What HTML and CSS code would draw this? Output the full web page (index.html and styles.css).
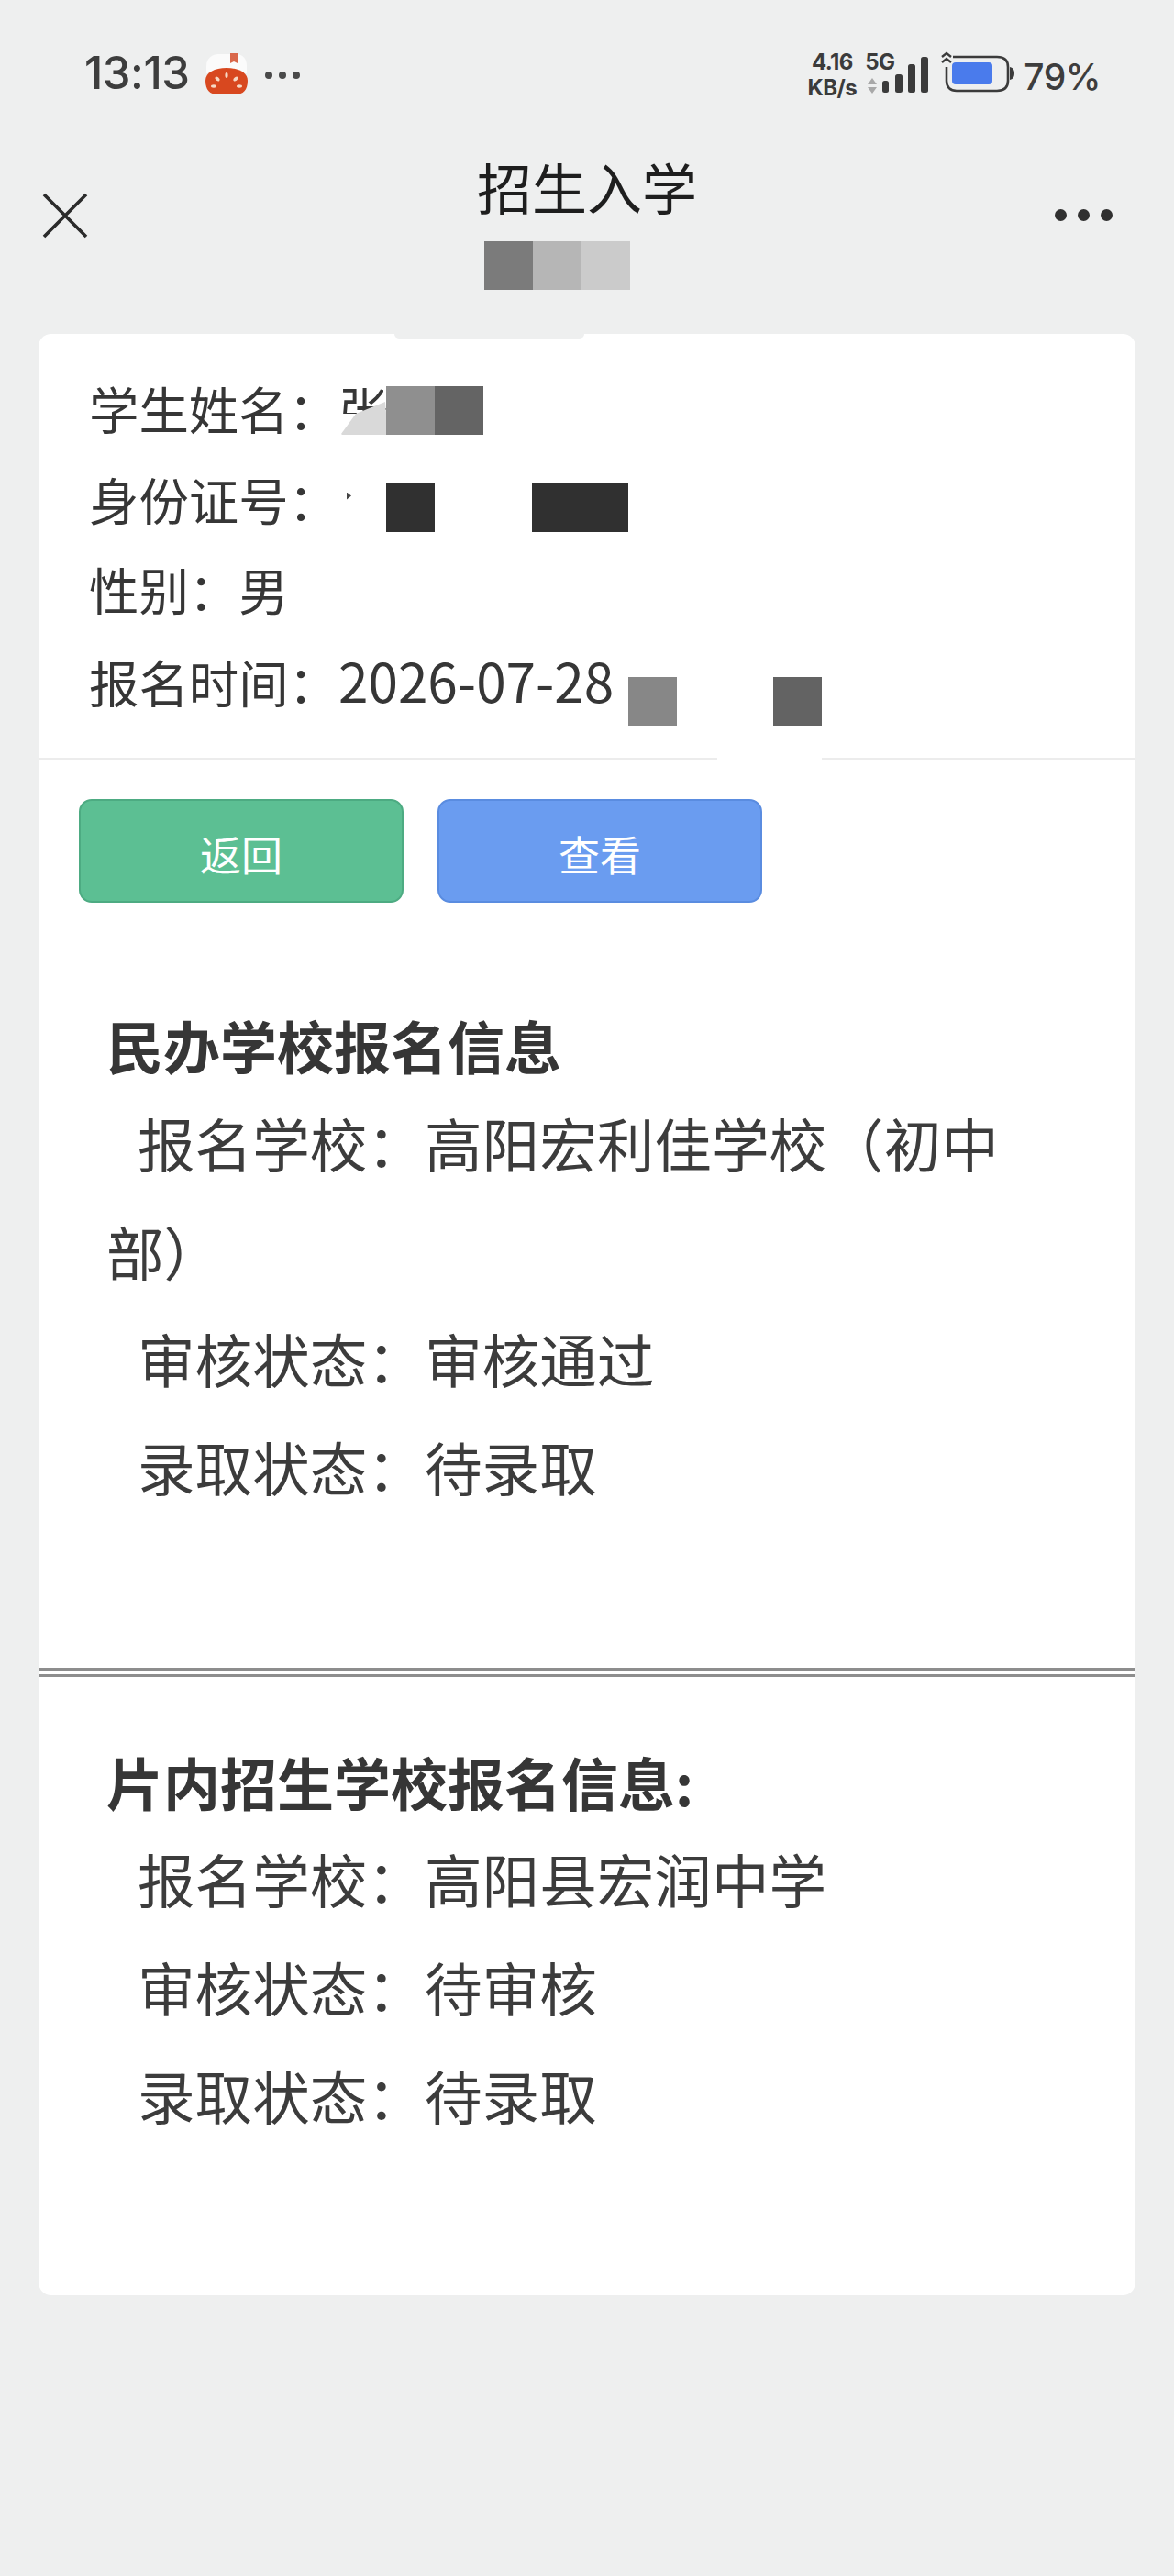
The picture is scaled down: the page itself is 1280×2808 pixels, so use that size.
FILE: index.html
```html
<!DOCTYPE html>
<html lang="zh-CN">
<head>
<meta charset="utf-8">
<title>招生入学</title>
<link rel="stylesheet" href="styles.css">
</head>
<body>
<div class="page">
  <header class="status">
    <div class="status-left">
      <span class="time">13:13</span>
      <svg class="app-icon" width="48" height="46" viewBox="0 0 48 46">
        <path d="M2 14C2 5 9 1 15 1H34C41 1 46 5 46 14V22H2Z" fill="#fbfbfb"/>
        <path d="M28 0H36V11L32 9L28 11Z" fill="#d9674a"/>
        <path d="M1 30C1 21 11 16 24 16C37 16 47 21 47 30C47 40 42 45 34 45H14C6 45 1 40 1 30Z" fill="#d8481f"/>
        <g fill="#f6d9c5">
          <ellipse cx="24" cy="24" rx="1.6" ry="3"/>
          <ellipse cx="14" cy="28" rx="1.8" ry="3" transform="rotate(-50 14 28)"/>
          <ellipse cx="34" cy="28" rx="1.8" ry="3" transform="rotate(50 34 28)"/>
          <ellipse cx="10" cy="36" rx="3" ry="1.7"/>
          <ellipse cx="38" cy="36" rx="3" ry="1.7"/>
        </g>
      </svg>
      <span class="status-dots"><i></i><i></i><i></i></span>
    </div>
    <div class="status-right">
      <div class="net">
        <span class="speed">4.16</span>
        <span class="unit">KB/s</span>
      </div>
      <div class="cell">
        <span class="five-g">5G</span>
        <svg class="updown" width="10" height="17" viewBox="0 0 10 17"><path d="M5 0L10 7H0ZM5 17L0 10H10Z" fill="#a8a8a8"/></svg>
      </div>
      <svg class="signal" width="50" height="40" viewBox="0 0 50 40">
        <rect x="0" y="26" width="7" height="13" rx="2.5" fill="#3b3b3b"/>
        <rect x="14" y="19" width="8" height="20" rx="2.5" fill="#3b3b3b"/>
        <rect x="28" y="8" width="8" height="31" rx="2.5" fill="#3b3b3b"/>
        <rect x="42" y="0" width="8" height="39" rx="2.5" fill="#3b3b3b"/>
      </svg>
      <svg class="battery" width="82" height="46" viewBox="0 0 82 46">
        <path d="M2 7L7 3L12 7M2 13L7 9L12 13" fill="none" stroke="#3b3b3b" stroke-width="2.4"/>
        <path d="M14 7H62C70 7 74 11 74 18V33C74 40 70 44 62 44H18C11 44 7 40 7 33V18" fill="none" stroke="#3b3b3b" stroke-width="2.6"/>
        <rect x="13" y="13" width="44" height="24" rx="4" fill="#4a7bec"/>
        <path d="M76 18C80 19 81 22 81 25C81 28 80 31 76 32Z" fill="#3b3b3b"/>
      </svg>
      <span class="percent">79%</span>
    </div>
  </header>

  <nav class="nav">
    <div class="nav-left">
      <svg width="50" height="50" viewBox="0 0 50 50"><path d="M2 2L48 48M48 2L2 48" fill="none" stroke="#2b2b2b" stroke-width="3.6"/></svg>
    </div>
    <div class="nav-center">
      <div class="title">招生入学</div>
      <div class="title-mask"><i class="m1"></i><i class="m2"></i><i class="m3"></i></div>
    </div>
    <div class="nav-right"><span class="more"><i></i><i></i><i></i></span></div>
  </nav>

  <main class="card">
    <span class="card-notch"></span>
    <section class="info">
      <div class="info-row">学生姓名：张
        <svg class="mask-name" width="51" height="53" viewBox="0 0 51 53"><path d="M0 30H16V53H0ZM46 2L51 0V24H46Z" fill="#fff"/><path d="M0 52L16 30L48 17L51 53H1Z" fill="#d9d9d9"/></svg>
        <span class="block b-name1"></span><span class="block b-name2"></span>
      </div>
      <div class="info-row">身份证号：<span class="tick"></span>
        <span class="block b-id1"></span><span class="block b-id2"></span>
      </div>
      <div class="info-row">性别：男</div>
      <div class="info-row">报名时间：<span class="date">2026-07-28</span>
        <span class="block b-time1"></span><span class="block b-time2"></span>
      </div>
      <span class="line-gap"></span>
    </section>

    <div class="actions">
      <button class="btn btn-green" type="button">返回</button>
      <button class="btn btn-blue" type="button">查看</button>
    </div>

    <section class="school school-a">
      <h2>民办学校报名信息</h2>
      <p>报名学校：高阳宏利佳学校（初中部）</p>
      <p>审核状态：审核通过</p>
      <p>录取状态：待录取</p>
    </section>

    <hr class="rule">

    <section class="school school-b">
      <h2>片内招生学校报名信息:</h2>
      <p>报名学校：高阳县宏润中学</p>
      <p>审核状态：待审核</p>
      <p>录取状态：待录取</p>
    </section>
  </main>
</div>
</body>
</html>
```

FILE: styles.css
```css
* { box-sizing: border-box; }
html, body { margin: 0; padding: 0; }
body {
  background: #eeefef;
  font-family: "Noto Sans CJK SC", "Noto Sans", sans-serif;
  color: #333;
}
.page { width: 1280px; height: 2808px; background: #eeefef; overflow: hidden; }

/* status bar */
.status {
  height: 160px;
  padding: 54px 80px 0 92px;
  display: flex;
  justify-content: space-between;
  align-items: flex-start;
}
.status-left { display: flex; align-items: center; height: 52px; }
.time { font-family: Inter, sans-serif; font-weight: 500; font-size: 49px; line-height: 52px; color: #3d3d3d; letter-spacing: -0.5px; }
.app-icon { margin-left: 17px; margin-top: 2px; }
.status-dots { display: flex; gap: 7px; margin-left: 18px; margin-top: 4px; }
.status-dots i { width: 8px; height: 8px; border-radius: 50%; background: #4a4a4a; display: block; }
.status-right { display: flex; align-items: flex-start; height: 52px; }
.net, .cell { display: flex; flex-direction: column; font-family: Inter, sans-serif; font-weight: 700; color: #3b3b3b; }
.net { width: 54px; align-items: center; font-size: 24px; line-height: 28px; letter-spacing: -0.6px; }
.cell { margin-left: 9px; width: 34px; font-size: 24px; line-height: 28px; letter-spacing: -0.6px; }
.updown { margin-top: 3px; margin-left: 3px; }
.signal { margin-left: -15px; margin-top: 8px; }
.battery { margin-left: 13px; margin-top: 1px; }
.percent { font-family: Inter, sans-serif; font-weight: 500; font-size: 39px; line-height: 48px; color: #3d3d3d; margin-left: 9px; margin-top: 6px; letter-spacing: -0.5px; }

/* navigation */
.nav {
  height: 204px;
  display: grid;
  grid-template-columns: 1fr 240px 1fr;
}
.nav-left { padding: 50px 0 0 46px; }
.nav-left svg { display: block; }
.nav-center { display: flex; flex-direction: column; align-items: center; }
.title { font-size: 60px; line-height: 86px; color: #1e1e1e; white-space: nowrap; }
.title-mask { display: flex; margin-top: 17px; margin-right: 66px; }
.title-mask i { display: block; width: 53px; height: 53px; }
.m1 { background: #7b7b7b; }
.m2 { background: #b6b6b6; }
.m3 { background: #cbcbcb; }
.nav-right { display: flex; justify-content: flex-end; padding: 68px 67px 0 0; }
.more { display: flex; gap: 12px; height: 14px; }
.more i { display: block; width: 13px; height: 13px; border-radius: 50%; background: #303030; }

/* card */
.card {
  position: relative;
  width: 1196px;
  height: 2138px;
  margin-left: 42px;
  background: #fff;
  border-radius: 14px;
}
.card-notch { position: absolute; left: 388px; top: 0; width: 207px; height: 5px; background: #eeefef; border-radius: 0 0 12px 12px; }

.info {
  position: relative;
  padding: 32px 0 36px 55px;
  border-bottom: 2px solid #ececec;
}
.info-row {
  position: relative;
  font-size: 54.4px;
  line-height: 98.5px;
  height: 98.5px;
  color: #363636;
  white-space: nowrap;
}
.date { font-size: 58.5px; }
.block { position: absolute; display: block; width: 53px; height: 53px; }
.mask-name { position: absolute; left: 275px; top: 25px; }
.b-name1 { left: 324px; top: 25px; background: #8f8f8f; }
.b-name2 { left: 377px; top: 25px; background: #646464; }
.tick { position: absolute; left: 281px; top: 42px; width: 5px; height: 8px; background: #444; clip-path: polygon(0 0, 100% 50%, 0 100%); }
.b-id1 { left: 324px; top: 32px; background: #303030; }
.b-id2 { left: 483px; top: 32px; width: 105px; background: #303030; }
.b-time1 { left: 588px; top: 46px; background: #878787; }
.b-time2 { left: 746px; top: 46px; background: #636363; }
.line-gap { position: absolute; left: 740px; bottom: -2px; width: 114px; height: 4px; background: #fff; }

/* buttons */
.actions { display: flex; gap: 37px; padding: 43px 0 0 44px; }
.btn {
  width: 354px;
  height: 113px;
  border-radius: 14px;
  font-family: inherit;
  font-size: 45px;
  color: #fff;
  padding: 5px 0 0;
}
.btn-green { background: #5cbf93; border: 2px solid #4dab82; }
.btn-blue { background: #6a9cf0; border: 2px solid #5a8ce0; }

/* schools */
.school { padding: 0 100px 0 74px; }
.school-a { padding-top: 109px; }
.school-b { padding-top: 69px; }
.school h2 { margin: 0; font-size: 62px; font-weight: 700; color: #363636; white-space: nowrap; }
.school-a h2 { line-height: 93px; }
.school-b h2 { line-height: 91px; }
.school p { margin: 0; font-size: 62.6px; line-height: 117.6px; color: #3c3c3c; text-indent: 34px; }
.rule { display: block; margin: 162px 0 0; border: 0; border-top: 10px double #8d8d8d; height: 0; }
```
